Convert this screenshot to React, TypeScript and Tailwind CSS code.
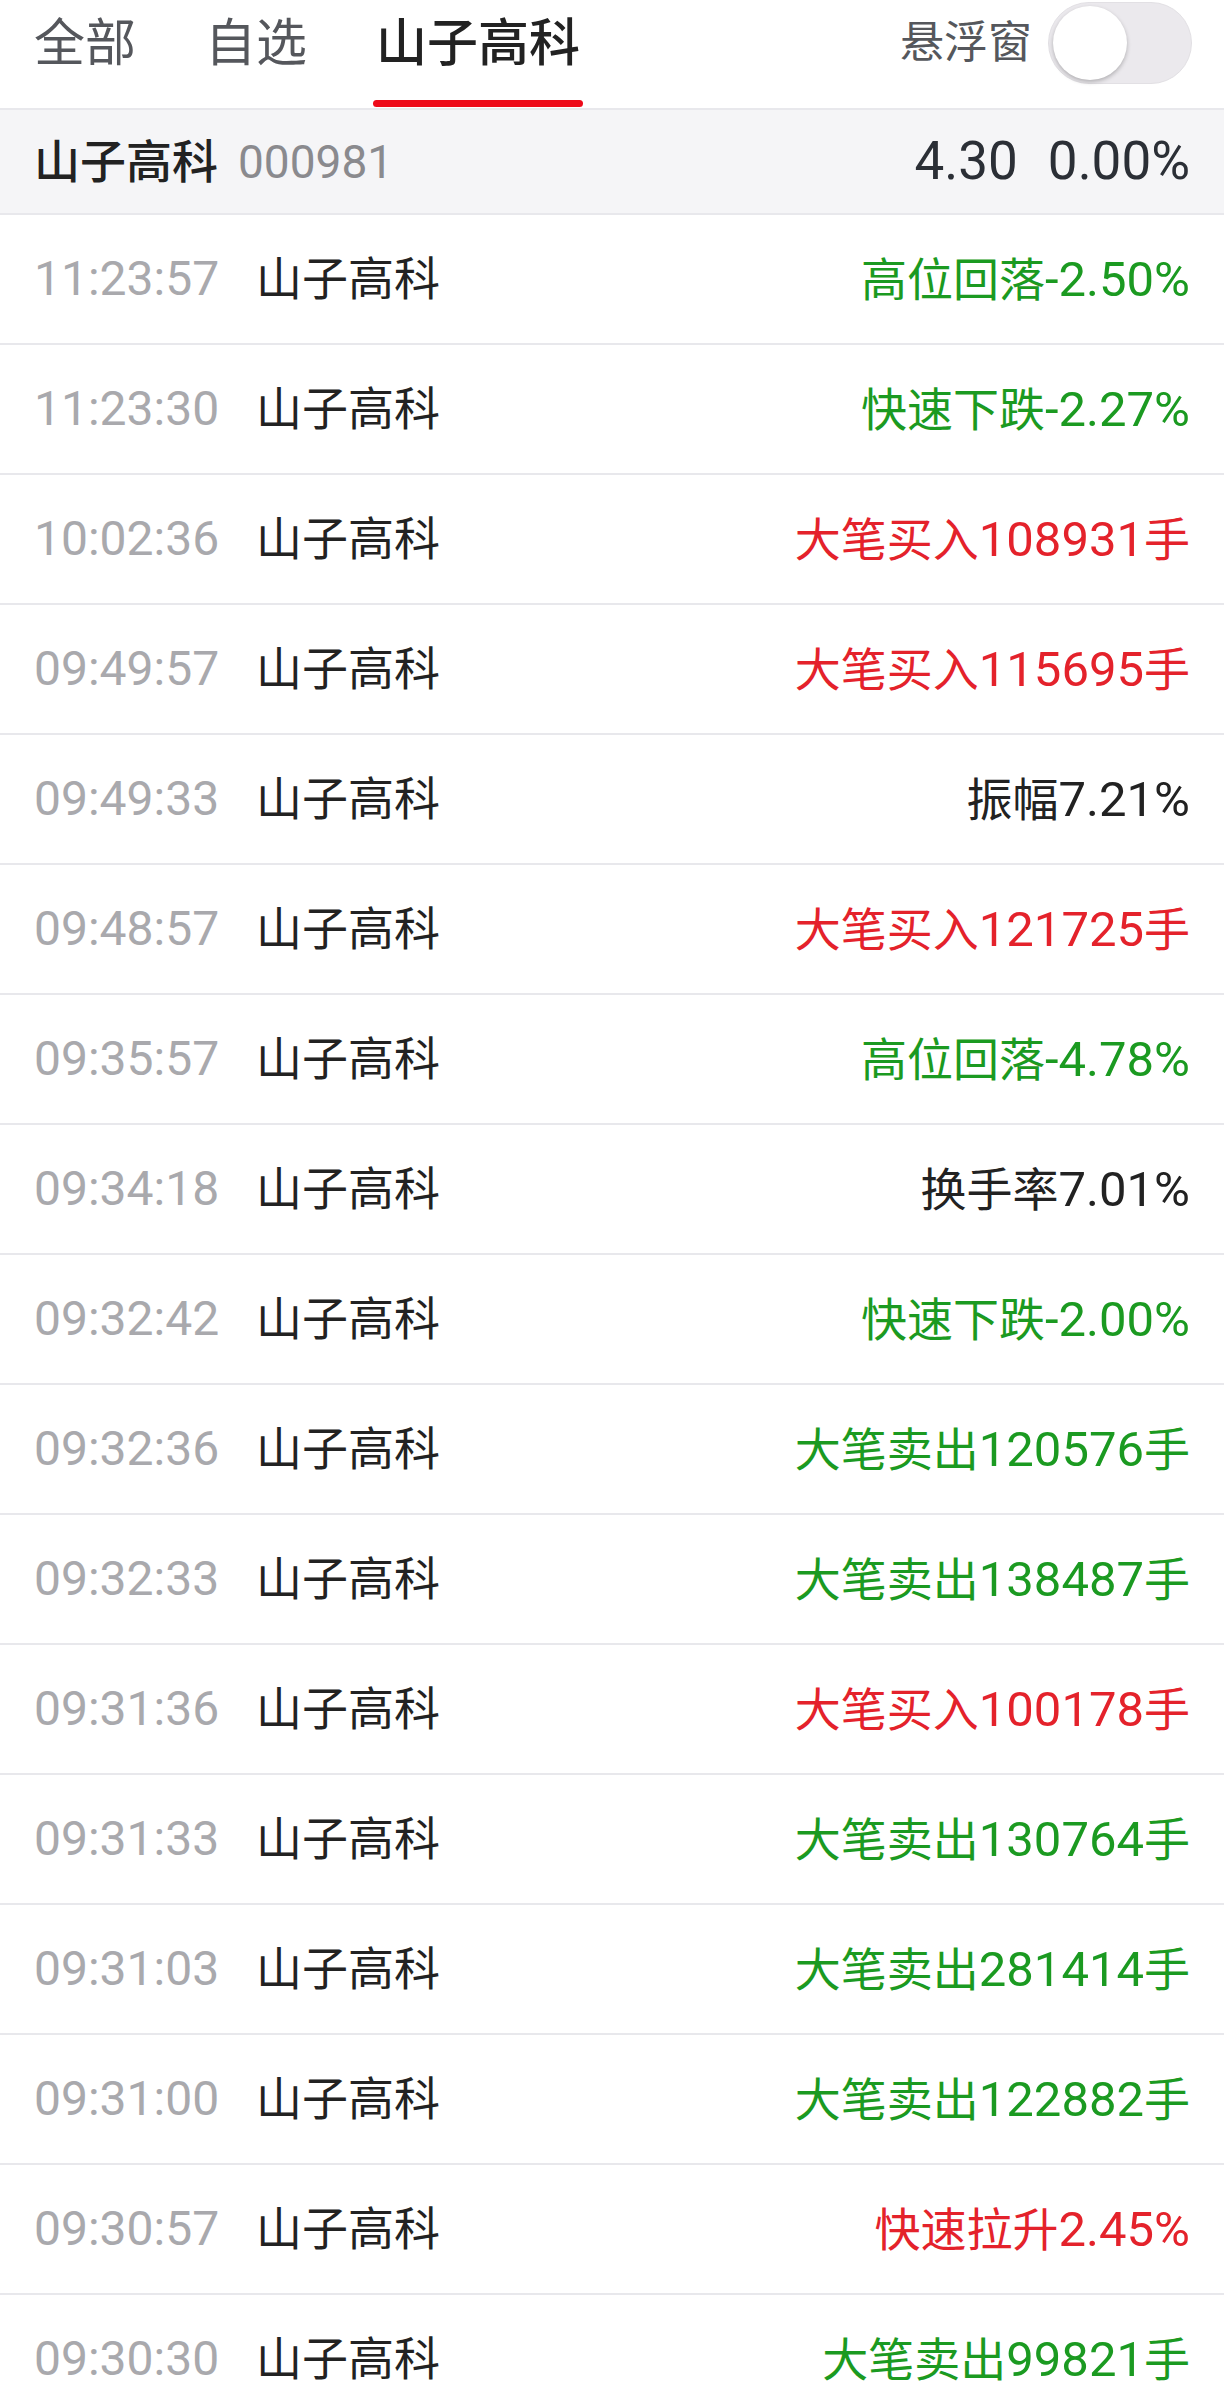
import React from 'react';

type Tone = 'green' | 'red' | 'black';

const rows: { time: string; text: string; tone: Tone }[] = [
  { time: '11:23:57', text: '高位回落-2.50%', tone: 'green' },
  { time: '11:23:30', text: '快速下跌-2.27%', tone: 'green' },
  { time: '10:02:36', text: '大笔买入108931手', tone: 'red' },
  { time: '09:49:57', text: '大笔买入115695手', tone: 'red' },
  { time: '09:49:33', text: '振幅7.21%', tone: 'black' },
  { time: '09:48:57', text: '大笔买入121725手', tone: 'red' },
  { time: '09:35:57', text: '高位回落-4.78%', tone: 'green' },
  { time: '09:34:18', text: '换手率7.01%', tone: 'black' },
  { time: '09:32:42', text: '快速下跌-2.00%', tone: 'green' },
  { time: '09:32:36', text: '大笔卖出120576手', tone: 'green' },
  { time: '09:32:33', text: '大笔卖出138487手', tone: 'green' },
  { time: '09:31:36', text: '大笔买入100178手', tone: 'red' },
  { time: '09:31:33', text: '大笔卖出130764手', tone: 'green' },
  { time: '09:31:03', text: '大笔卖出281414手', tone: 'green' },
  { time: '09:31:00', text: '大笔卖出122882手', tone: 'green' },
  { time: '09:30:57', text: '快速拉升2.45%', tone: 'red' },
  { time: '09:30:30', text: '大笔卖出99821手', tone: 'green' },
];

const toneClass: Record<Tone, string> = {
  green: 'text-[#1b9a21]',
  red: 'text-[#e4222b]',
  black: 'text-[#222222]',
};

const tabs = [
  { title: '全部', active: false },
  { title: '自选', active: false },
  { title: '山子高科', active: true },
];

// CJK runs render a bit smaller than the latin digits, like the phone font does
const Mixed = ({ text }: { text: string }) => (
  <>
    {text.split(/([\u4e00-\u9fff]+)/).filter(Boolean).map((part, i) =>
      /[\u4e00-\u9fff]/.test(part) ? (
        <span key={i} className="text-[46px]">{part}</span>
      ) : (
        <span key={i} className="text-[49px]">{part}</span>
      ),
    )}
  </>
);

const Header = () => (
  <div className="h-[110px] border-b-2 border-[#e8e8ec] flex justify-between px-[34px]">
    <div className="flex gap-[69px] h-full">
      {tabs.map((tab) => (
        <div key={tab.title} className="flex flex-col justify-between h-full">
          <div
            className={`h-[86px] flex items-center leading-none text-[51px] ${
              tab.active ? 'text-[#222222] font-medium' : 'text-[#55575c]'
            }`}
          >
            {tab.title}
          </div>
          <div
            className={`h-[7px] mb-[1px] -mx-[3px] rounded-full ${
              tab.active ? 'bg-[#ee0a1a]' : 'bg-transparent'
            }`}
          />
        </div>
      ))}
    </div>
    <div className="h-[86px] flex items-center gap-[16px] -mr-[2px]">
      <span className="text-[44px] leading-none text-[#55575c]">悬浮窗</span>
      <div className="w-[144px] h-[82px] rounded-full bg-[#ebe9ed] border border-[#e2e0e4] flex items-center px-[4px]">
        <div className="w-[74px] h-[74px] rounded-full bg-white shadow-[0_2px_4px_rgba(0,0,0,0.25)]" />
      </div>
    </div>
  </div>
);

const StockBar = () => (
  <div className="h-[105px] bg-[#f5f5f7] border-b-2 border-[#e8e8ec] flex items-center justify-between px-[34px]">
    <div className="flex items-center gap-[20px]">
      <span className="text-[46px] leading-none font-medium text-[#222222]">山子高科</span>
      <span className="text-[46px] leading-none text-[#8a8a8e]">000981</span>
    </div>
    <div className="flex items-center gap-[30px] text-[53px] leading-none text-[#2b2f36]">
      <span>4.30</span>
      <span>0.00%</span>
    </div>
  </div>
);

export default function App() {
  return (
    <div
      className="w-[1224px] h-[2393px] overflow-hidden bg-white"
      style={{ fontFamily: 'Roboto, "Noto Sans CJK SC", sans-serif' }}
    >
      <Header />
      <StockBar />
      {rows.map((row) => (
        <div
          key={row.time}
          className="h-[130px] border-b-2 border-[#e8e8ec] flex items-center px-[34px] leading-none"
        >
          <span className="w-[222px] shrink-0 text-[48px] text-[#a9a9ad]">{row.time}</span>
          <span className="text-[46px] text-[#222222]">山子高科</span>
          <span className={`ml-auto ${toneClass[row.tone]}`}>
            <Mixed text={row.text} />
          </span>
        </div>
      ))}
    </div>
  );
}
